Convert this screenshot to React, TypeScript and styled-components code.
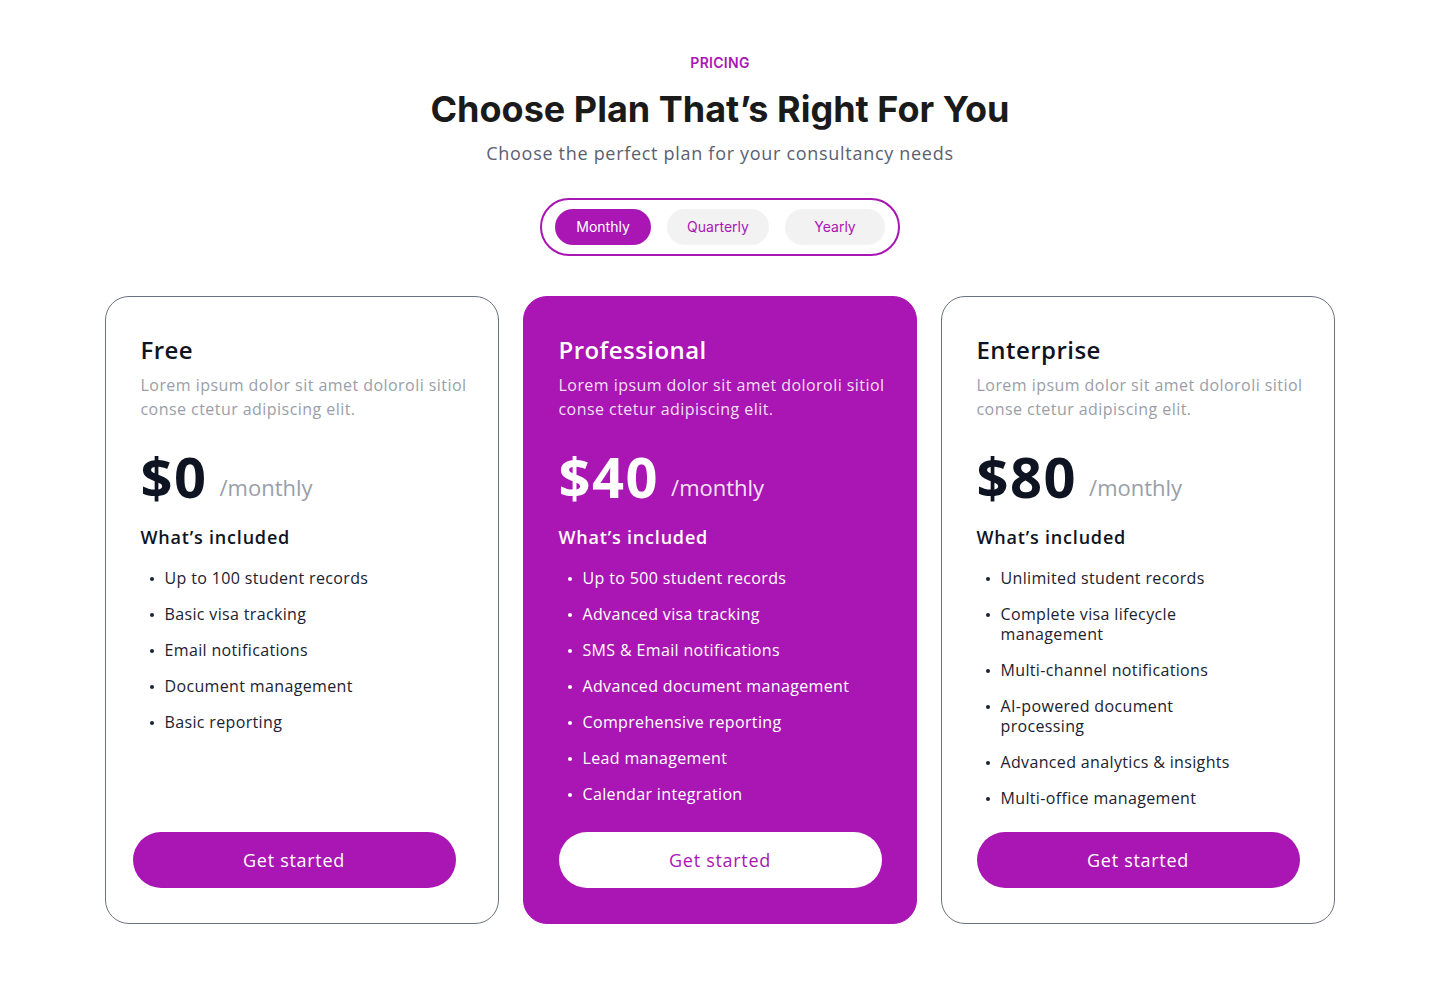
import React from "react";
import styled, { createGlobalStyle } from "styled-components";

const PURPLE = "#aa16b4";
const BODY = `"Open Sans", "Noto Sans", sans-serif`;
const HEAD = `Inter, "Noto Sans", sans-serif`;

const Global = createGlobalStyle`
  * { box-sizing: border-box; }
  html, body { margin: 0; padding: 0; background: #fff; }
  body { font-family: ${BODY}; -webkit-font-smoothing: antialiased; }
`;

const Page = styled.main`
  width: 1440px;
  min-height: 984px;
  padding-top: 53px;
  display: flex;
  flex-direction: column;
  align-items: center;
`;

const Eyebrow = styled.div`
  font-family: ${HEAD};
  font-size: 14px;
  font-weight: 600;
  line-height: 20px;
  color: ${PURPLE};
  letter-spacing: 0.02em;
`;

const Heading = styled.h1`
  margin: 14px 0 0;
  font-family: ${HEAD};
  font-size: 36px;
  font-weight: 700;
  line-height: 44px;
  letter-spacing: 0;
  color: #1a1a1a;
`;

const Sub = styled.p`
  margin: 10px 0 0;
  font-size: 18px;
  line-height: 24px;
  letter-spacing: 0.7px;
  color: #5b6070;
`;

const Toggle = styled.div`
  margin-top: 33px;
  height: 58px;
  border: 2px solid ${PURPLE};
  border-radius: 29px;
  padding: 0 13px;
  display: flex;
  align-items: center;
  gap: 16px;
`;

const Tab = styled.button<{ $active?: boolean; $w: number }>`
  width: ${(p) => p.$w}px;
  height: 36px;
  border: none;
  border-radius: 18px;
  padding: 0 0 1px;
  font-family: ${HEAD};
  font-size: 14px;
  font-weight: 400;
  cursor: pointer;
  background: ${(p) => (p.$active ? PURPLE : "#f2f2f2")};
  color: ${(p) => (p.$active ? "#fff" : PURPLE)};
`;

const Cards = styled.section`
  margin-top: 40px;
  display: grid;
  grid-template-columns: repeat(3, 394px);
  gap: 24px;
`;

const Card = styled.article<{ $featured?: boolean }>`
  height: 628px;
  border-radius: 24px;
  padding: 35px 30px 35px 34.5px;
  display: flex;
  flex-direction: column;
  background: ${(p) => (p.$featured ? PURPLE : "#fff")};
  border: 1.5px solid ${(p) => (p.$featured ? PURPLE : "#6b7280")};
  color: ${(p) => (p.$featured ? "#fff" : "#111827")};
`;

const Title = styled.h2<{ $featured?: boolean }>`
  margin: 0;
  font-size: 24px;
  font-weight: 600;
  line-height: 36px;
  letter-spacing: 0.45px;
  color: ${(p) => (p.$featured ? "#fff" : "#0f1422")};
`;

const Desc = styled.p<{ $featured?: boolean }>`
  margin: 5px 0 0;
  font-size: 16px;
  line-height: 24px;
  letter-spacing: 0.45px;
  white-space: nowrap;
  color: ${(p) => (p.$featured ? "rgba(255,255,255,0.88)" : "#9a9ea8")};
`;

const PriceRow = styled.div`
  margin-top: 23px;
  display: flex;
  align-items: baseline;
  gap: 12px;
  height: 64px;
`;

const Amount = styled.span<{ $featured?: boolean }>`
  font-size: 56px;
  font-weight: 700;
  line-height: 64px;
  letter-spacing: 1.5px;
  color: ${(p) => (p.$featured ? "#fff" : "#0f1422")};
`;

const Period = styled.span<{ $featured?: boolean }>`
  font-size: 22px;
  line-height: 28px;
  position: relative;
  top: -2px;
  color: ${(p) => (p.$featured ? "rgba(255,255,255,0.9)" : "#9a9ea8")};
`;

const Included = styled.h3<{ $featured?: boolean }>`
  margin: 15px 0 0;
  font-size: 18px;
  font-weight: 600;
  line-height: 28px;
  letter-spacing: 0.8px;
  color: ${(p) => (p.$featured ? "#fff" : "#0f1422")};
`;

const List = styled.ul`
  margin: 17px 0 0;
  padding: 0;
  list-style: none;
  display: flex;
  flex-direction: column;
  gap: 16px;
`;

const Item = styled.li<{ $featured?: boolean }>`
  position: relative;
  padding-left: 24px;
  font-size: 16px;
  line-height: 20px;
  letter-spacing: 0.35px;
  white-space: pre-line;
  color: ${(p) => (p.$featured ? "#fff" : "#1b2230")};
  &::before {
    content: "";
    position: absolute;
    left: 9px;
    top: 9px;
    width: 4px;
    height: 4px;
    border-radius: 50%;
    background: currentColor;
  }
`;

const CTA = styled.button<{ $featured?: boolean; $shift?: number }>`
  margin-top: auto;
  margin-left: ${(p) => p.$shift ?? 0}px;
  width: 323px;
  height: 56px;
  flex-shrink: 0;
  border-radius: 28px;
  border: none;
  font-family: ${BODY};
  font-size: 18px;
  font-weight: 400;
  letter-spacing: 0.7px;
  cursor: pointer;
  background: ${(p) => (p.$featured ? "#fff" : PURPLE)};
  color: ${(p) => (p.$featured ? PURPLE : "#fff")};
`;

type Plan = {
  name: string;
  price: string;
  featured?: boolean;
  shift?: number;
  items: string[];
};

const plans: Plan[] = [
  {
    name: "Free",
    price: "$0",
    shift: -8,
    items: [
      "Up to 100 student records",
      "Basic visa tracking",
      "Email notifications",
      "Document management",
      "Basic reporting",
    ],
  },
  {
    name: "Professional",
    price: "$40",
    featured: true,
    items: [
      "Up to 500 student records",
      "Advanced visa tracking",
      "SMS & Email notifications",
      "Advanced document management",
      "Comprehensive reporting",
      "Lead management",
      "Calendar integration",
    ],
  },
  {
    name: "Enterprise",
    price: "$80",
    items: [
      "Unlimited student records",
      "Complete visa lifecycle\nmanagement",
      "Multi-channel notifications",
      "AI-powered document\nprocessing",
      "Advanced analytics & insights",
      "Multi-office management",
    ],
  },
];

export default function App() {
  return (
    <>
      <Global />
      <Page>
        <Eyebrow>PRICING</Eyebrow>
        <Heading>Choose Plan That’s Right For You</Heading>
        <Sub>Choose the perfect plan for your consultancy needs</Sub>
        <Toggle>
          <Tab $active $w={96}>Monthly</Tab>
          <Tab $w={102}>Quarterly</Tab>
          <Tab $w={100}>Yearly</Tab>
        </Toggle>
        <Cards>
          {plans.map((p) => (
            <Card key={p.name} $featured={p.featured}>
              <Title $featured={p.featured}>{p.name}</Title>
              <Desc $featured={p.featured}>
                Lorem ipsum dolor sit amet doloroli sitiol
                <br />
                conse ctetur adipiscing elit.
              </Desc>
              <PriceRow>
                <Amount $featured={p.featured}>{p.price}</Amount>
                <Period $featured={p.featured}>/monthly</Period>
              </PriceRow>
              <Included $featured={p.featured}>What’s included</Included>
              <List>
                {p.items.map((it) => (
                  <Item key={it} $featured={p.featured}>
                    {it}
                  </Item>
                ))}
              </List>
              <CTA $featured={p.featured} $shift={p.shift}>
                Get started
              </CTA>
            </Card>
          ))}
        </Cards>
      </Page>
    </>
  );
}
